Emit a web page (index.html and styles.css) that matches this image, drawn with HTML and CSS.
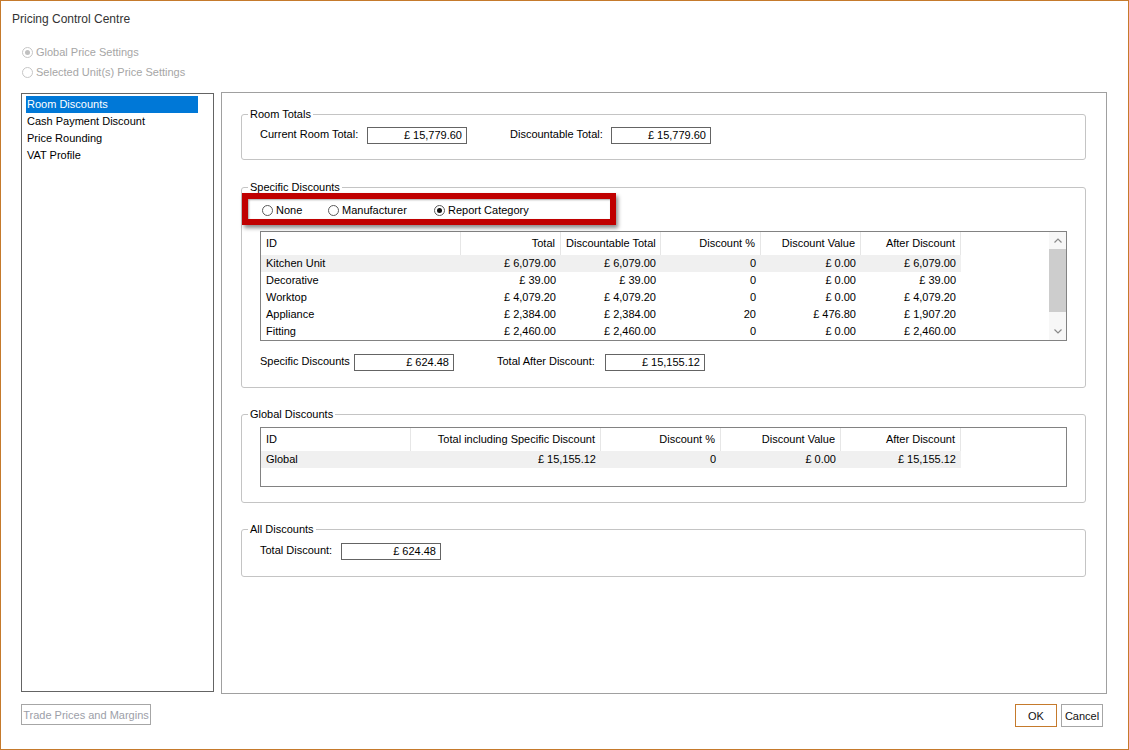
FILE: index.html
```html
<!DOCTYPE html>
<html>
<head>
<meta charset="utf-8">
<link rel="stylesheet" href="styles.css">
</head>
<body>
<div class="window">
  <div class="title">Pricing Control Centre</div>
  <div class="scope">
    <div class="radio disabled"><span class="rb checked"></span>Global Price Settings</div>
    <div class="radio disabled"><span class="rb"></span>Selected Unit(s) Price Settings</div>
  </div>
  <div class="main">
    <ul class="nav">
      <li class="sel">Room Discounts</li>
      <li>Cash Payment Discount</li>
      <li>Price Rounding</li>
      <li>VAT Profile</li>
    </ul>
    <div class="panel">
      <fieldset class="group g-room">
        <legend>Room Totals</legend>
        <div class="fields">
          <span class="lbl w-crt">Current Room Total:</span>
          <span class="val">£ 15,779.60</span>
          <span class="lbl w-disc gap43">Discountable Total:</span>
          <span class="val">£ 15,779.60</span>
        </div>
      </fieldset>

      <fieldset class="group g-spec">
        <legend>Specific Discounts</legend>
        <div class="opts">
          <div class="highlight"></div>
          <div class="radio opt o-none"><span class="rb"></span>None</div>
          <div class="radio opt o-mfr"><span class="rb"></span>Manufacturer</div>
          <div class="radio opt"><span class="rb checked"></span>Report Category</div>
        </div>
        <div class="tbl t-spec">
          <div class="tbl-body">
            <div class="tr head">
              <div class="td c-id">ID</div>
              <div class="td">Total</div>
              <div class="td">Discountable Total</div>
              <div class="td">Discount %</div>
              <div class="td">Discount Value</div>
              <div class="td">After Discount</div>
            </div>
            <div class="tr hl">
              <div class="td c-id">Kitchen Unit</div>
              <div class="td">£ 6,079.00</div>
              <div class="td">£ 6,079.00</div>
              <div class="td">0</div>
              <div class="td">£ 0.00</div>
              <div class="td">£ 6,079.00</div>
            </div>
            <div class="tr">
              <div class="td c-id">Decorative</div>
              <div class="td">£ 39.00</div>
              <div class="td">£ 39.00</div>
              <div class="td">0</div>
              <div class="td">£ 0.00</div>
              <div class="td">£ 39.00</div>
            </div>
            <div class="tr">
              <div class="td c-id">Worktop</div>
              <div class="td">£ 4,079.20</div>
              <div class="td">£ 4,079.20</div>
              <div class="td">0</div>
              <div class="td">£ 0.00</div>
              <div class="td">£ 4,079.20</div>
            </div>
            <div class="tr">
              <div class="td c-id">Appliance</div>
              <div class="td">£ 2,384.00</div>
              <div class="td">£ 2,384.00</div>
              <div class="td">20</div>
              <div class="td">£ 476.80</div>
              <div class="td">£ 1,907.20</div>
            </div>
            <div class="tr">
              <div class="td c-id">Fitting</div>
              <div class="td">£ 2,460.00</div>
              <div class="td">£ 2,460.00</div>
              <div class="td">0</div>
              <div class="td">£ 0.00</div>
              <div class="td">£ 2,460.00</div>
            </div>
          </div>
          <div class="sb">
            <div class="sb-btn"><svg width="8" height="5" viewBox="0 0 8 5"><polyline points="0.5,4.5 4,1 7.5,4.5" fill="none" stroke="#8a8a8a" stroke-width="1.2"/></svg></div>
            <div class="sb-thumb"></div>
            <div class="sb-track"></div>
            <div class="sb-btn"><svg width="8" height="5" viewBox="0 0 8 5"><polyline points="0.5,0.5 4,4 7.5,0.5" fill="none" stroke="#8a8a8a" stroke-width="1.2"/></svg></div>
          </div>
        </div>
        <div class="fields f-spec">
          <span class="lbl w-sd">Specific Discounts</span>
          <span class="val">£ 624.48</span>
          <span class="lbl w-tad gap43">Total After Discount:</span>
          <span class="val">£ 15,155.12</span>
        </div>
      </fieldset>

      <fieldset class="group g-glob">
        <legend>Global Discounts</legend>
        <div class="tbl t-glob">
          <div class="tbl-body">
            <div class="tr head">
              <div class="td c-id">ID</div>
              <div class="td">Total including Specific Discount</div>
              <div class="td">Discount %</div>
              <div class="td">Discount Value</div>
              <div class="td">After Discount</div>
            </div>
            <div class="tr hl">
              <div class="td c-id">Global</div>
              <div class="td">£ 15,155.12</div>
              <div class="td">0</div>
              <div class="td">£ 0.00</div>
              <div class="td">£ 15,155.12</div>
            </div>
          </div>
        </div>
      </fieldset>

      <fieldset class="group g-all">
        <legend>All Discounts</legend>
        <div class="fields">
          <span class="lbl w-td">Total Discount:</span>
          <span class="val">£ 624.48</span>
        </div>
      </fieldset>
    </div>
  </div>
  <div class="footer">
    <div class="btn btn-trade">Trade Prices and Margins</div>
    <div class="spacer"></div>
    <div class="btn btn-ok">OK</div>
    <div class="btn btn-cancel">Cancel</div>
  </div>
</div>
</body>
</html>
```

FILE: styles.css
```css
* { box-sizing: border-box; }

body {
  margin: 0;
  font-family: "Liberation Sans", Arial, sans-serif;
  font-size: 11px;
  color: #000;
  background: #fff;
}

.window {
  width: 1129px;
  height: 750px;
  border: 1px solid #c57a2c;
  display: flex;
  flex-direction: column;
  background: #fff;
}

.title {
  font-size: 12px;
  line-height: 16px;
  padding: 10px 0 0 11px;
  color: #333;
}

.scope {
  margin-top: 15px;
  padding-left: 21px;
}

.radio {
  display: flex;
  align-items: center;
  height: 20px;
  gap: 3px;
  white-space: nowrap;
}

.radio.disabled { color: #a6a6a6; }

.rb {
  flex: none;
  width: 11px;
  height: 11px;
  border: 1px solid #5a5a5a;
  border-radius: 50%;
  background: #fff;
  position: relative;
}

.rb.checked::after {
  content: "";
  position: absolute;
  left: 2px;
  top: 2px;
  width: 5px;
  height: 5px;
  border-radius: 50%;
  background: #111;
}

.disabled .rb { border-color: #c6c6c6; }
.disabled .rb.checked::after { background: #c0c0c0; }

.main {
  display: flex;
  gap: 7px;
  margin: 10px 21px 0 20px;
  height: 602px;
}

.nav {
  list-style: none;
  margin: 1px 0 0;
  padding: 2px 0 0 4px;
  width: 193px;
  height: 599px;
  border: 1px solid #646464;
}

.nav li {
  width: 172px;
  height: 17px;
  line-height: 17px;
  padding-left: 1px;
}

.nav li.sel {
  background: #0078d7;
  color: #fff;
}

.panel {
  flex: 1;
  border: 1px solid #a0a0a0;
  padding: 14px 20px 0 19px;
}

.group {
  margin: 0 0 19px;
  border: 1px solid #c4c4c4;
  border-radius: 3px;
  min-width: 0;
  padding: 0 18px;
}

.group legend {
  padding: 0 2px;
  margin-left: -12px;
  line-height: 14px;
}

.g-room { padding-top: 6px; padding-bottom: 15px; margin-bottom: 20px; }
.g-spec { padding-top: 8px; padding-bottom: 16px; position: relative; }
.g-glob { padding-top: 6px; padding-bottom: 15px; }
.g-all  { padding-top: 7px; padding-bottom: 16px; }

.fields {
  display: flex;
  align-items: flex-start;
}

.lbl {
  line-height: 14px;
  white-space: nowrap;
  flex: none;
}

.w-crt { width: 107px; }
.w-disc { width: 101px; }
.w-sd { width: 94px; }
.w-tad { width: 108px; }
.w-td { width: 81px; }
.gap43 { margin-left: 43px; }

.val {
  flex: none;
  width: 100px;
  height: 17px;
  border: 1px solid #646464;
  text-align: right;
  padding-right: 4px;
  line-height: 15px;
  white-space: nowrap;
}

.f-spec { margin-top: 13px; }

.opts {
  position: relative;
  display: flex;
  height: 16px;
  padding-left: 2px;
  margin-bottom: 13px;
}

.opts .radio { height: 16px; position: relative; }
.o-none { width: 66px; }
.o-mfr { width: 106px; }

.highlight {
  position: absolute;
  left: -18px;
  top: -9px;
  width: 374px;
  height: 32px;
  border: 6px solid #c00000;
  box-shadow: 2px 3px 4px rgba(0, 0, 0, 0.45), inset 1px 1px 2px rgba(0, 0, 0, 0.35);
}

.tbl {
  display: flex;
  border: 1px solid #828282;
}

.t-spec { height: 110px; }
.t-glob { height: 60px; }

.tbl-body { flex: 1; }

.tr {
  display: flex;
  height: 17px;
  line-height: 17px;
}

.tr.head {
  height: 23px;
  line-height: 23px;
}

.td {
  flex: none;
  padding: 0 5px;
  text-align: right;
  white-space: nowrap;
  width: 100px;
}

.td.c-id { text-align: left; }

.head .td { border-right: 1px solid #e6e6e6; }

.hl .td { background: #f0f0f0; }

.t-spec .c-id { width: 200px; }

.t-glob .td { width: 120px; }
.t-glob .td.c-id { width: 150px; }
.t-glob .td:nth-child(2) { width: 190px; }

.sb {
  width: 17px;
  display: flex;
  flex-direction: column;
  background: #f7f7f7;
}

.sb-btn {
  height: 17px;
  display: flex;
  align-items: center;
  justify-content: center;
}

.sb-thumb {
  height: 63px;
  background: #cdcdcd;
}

.sb-track { flex: 1; }

.footer {
  display: flex;
  align-items: flex-start;
  margin: 10px 25px 0 20px;
}

.spacer { flex: 1; }

.btn {
  display: flex;
  align-items: center;
  justify-content: center;
  white-space: nowrap;
}

.btn-trade {
  width: 130px;
  height: 21px;
  border: 1px solid #a6a6a6;
  color: #9c9ea8;
  font-size: 11px;
}

.btn-ok, .btn-cancel {
  width: 42px;
  height: 23px;
  font-size: 11px;
  color: #111;
}

.btn-ok { border: 1px solid #c57a2c; }
.btn-cancel { border: 1px solid #a6a6a6; margin-left: 4px; }
```
